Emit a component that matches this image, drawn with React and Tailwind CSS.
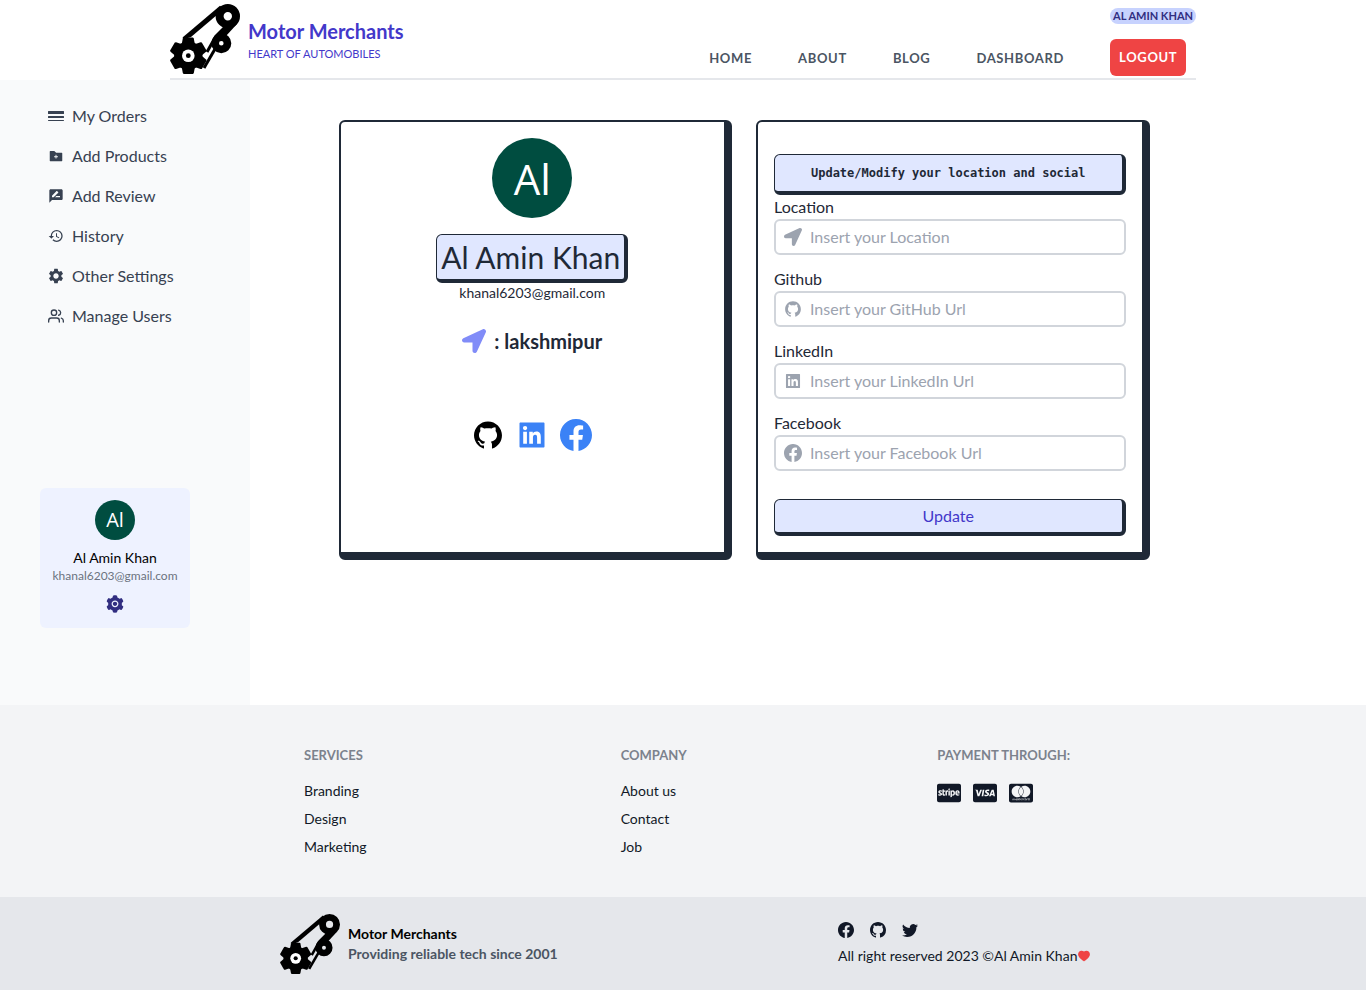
import React from "react";
import { BsBorderWidth, BsFacebook, BsGithub, BsTwitter } from "react-icons/bs";
import { AiFillFolderAdd, AiFillSetting, AiFillGithub, AiFillLinkedin, AiFillHeart } from "react-icons/ai";
import { MdRateReview, MdHistory, MdSettings } from "react-icons/md";
import { FiUsers } from "react-icons/fi";
import { FaLocationArrow, FaCcStripe, FaCcVisa, FaCcMastercard } from "react-icons/fa";

function Logo({ className }) {
  const teeth = [0, 60, 120, 180, 240, 300];
  return (
    <svg viewBox="0 0 70 70" className={className} role="img" aria-label="Motor Merchants logo">
      <path d="M14.5 35 L12.5 33.5 L50 1.8 L54 5 L21 33 Z" />
      <path d="M67 20 L56 32 L44 36 L45 31 L54 22 Z" />
      <g fill="none" stroke="#000" strokeWidth="3">
        <path d="M46 32 L37 48" />
        <path d="M45 45 L34 64" />
      </g>
      <path fillRule="evenodd" d="M57.8 0a12.2 12.2 0 1 1 0 24.4a12.2 12.2 0 1 1 0-24.4zM57.8 8a4.2 4.2 0 1 0 0 8.4a4.2 4.2 0 1 0 0-8.4z" />
      <path fillRule="evenodd" d="M51.3 29.3a10 10 0 1 1 0 20a10 10 0 1 1 0-20zM51.3 37a2.3 2.3 0 1 0 0 4.6a2.3 2.3 0 1 0 0-4.6z" />
      <g transform="translate(18.3 51.7)">
        <circle r="14.2" />
        {teeth.map((a) => (
          <path key={a} d="M-6.5 -12 L-5.5 -17.3 L-4.7 -18.3 H4.7 L5.5 -17.3 L6.5 -12 Z" transform={`rotate(${a})`} />
        ))}
        <circle r="6.3" fill="#fff" />
        <circle r="2.4" />
      </g>
    </svg>
  );
}

const nav = ["Home", "About", "Blog", "Dashboard"];
const side = [
  [BsBorderWidth, "My Orders", "size-4"],
  [AiFillFolderAdd, "Add Products", "size-4"],
  [MdRateReview, "Add Review", "size-4"],
  [MdHistory, "History", "size-4"],
  [MdSettings, "Other Settings", "size-[18px]"],
  [FiUsers, "Manage Users", "size-4"],
];
const fields = [
  [FaLocationArrow, "Location", "Insert your Location"],
  [AiFillGithub, "Github", "Insert your GitHub Url"],
  [AiFillLinkedin, "LinkedIn", "Insert your LinkedIn Url"],
  [BsFacebook, "Facebook", "Insert your Facebook Url"],
];
const columns = [
  ["Services", ["Branding", "Design", "Marketing"]],
  ["Company", ["About us", "Contact", "Job"]],
];

function Header() {
  return (
    <header className="mx-auto flex h-20 max-w-[1026px] justify-between border-b-2 border-[#e5e7eb]">
      <a href="#home" className="flex items-start gap-2 pt-1">
        <Logo className="size-[70px]" />
        <span className="flex flex-col gap-px pt-[13px] text-[#4338ca]">
          <span className="text-xl leading-7 font-bold">Motor Merchants</span>
          <span className="text-[11px] leading-4">HEART OF AUTOMOBILES</span>
        </span>
      </a>
      <nav className="flex items-end gap-[46px] text-[13px] font-bold tracking-wider text-[#4b5563] uppercase">
        {nav.map((n) => (
          <a key={n} href={`#${n.toLowerCase()}`} className="pb-2.5">{n}</a>
        ))}
        <div className="flex h-full flex-col items-start justify-between pt-2 pb-0.5">
          <span className="rounded-full bg-[#c7d2fe] px-[3px] text-[11px] leading-4 font-bold tracking-normal text-[#312e81]">Al Amin Khan</span>
          <button type="button" className="h-[37px] rounded-md bg-[#ef4444] px-[9px] font-bold tracking-wider text-white uppercase">Logout</button>
        </div>
      </nav>
    </header>
  );
}

function Sidebar() {
  return (
    <aside className="flex w-[250px] shrink-0 flex-col justify-between bg-[#f9fafb] px-10 pt-4 pb-[77px]">
      <nav className="flex flex-col">
        {side.map(([Icon, label, size]) => (
          <a key={label} href="#menu" className="flex h-10 items-center gap-2 px-2 text-[#374151]">
            <span className="flex size-4 shrink-0 items-center justify-center">
              <Icon className={`${size} shrink-0`} />
            </span>
            {label}
          </a>
        ))}
      </nav>
      <div className="flex h-[140px] w-[150px] flex-col items-center rounded-md bg-[#eef2ff] pt-3">
        <span className="flex size-10 items-center justify-center rounded-full bg-[#004d40] font-['Open_Sans',sans-serif] text-xl font-medium text-white">Al</span>
        <span className="mt-2 text-sm leading-5 text-black">Al Amin Khan</span>
        <span className="text-xs leading-4 text-[#6b7280]">khanal6203@gmail.com</span>
        <button type="button" aria-label="Settings" className="mt-2.5 text-[#312e81]"><AiFillSetting className="size-5" /></button>
      </div>
    </aside>
  );
}

function Profile() {
  return (
    <section className="flex flex-col items-center rounded-md border-2 border-r-8 border-b-8 border-[#1f2937] pt-4">
      <span className="flex size-20 items-center justify-center rounded-full bg-[#004d40] font-['Open_Sans',sans-serif] text-[42px] font-medium text-white">Al</span>
      <h1 className="mt-4 rounded-md border border-r-4 border-b-4 border-[#1f2937] bg-[#e0e7ff] px-1 pt-1 pb-1 text-3xl leading-9">Al Amin Khan</h1>
      <p className="text-sm leading-5">khanal6203@gmail.com</p>
      <p className="mt-6 flex items-center gap-2 text-xl leading-7 font-bold">
        <FaLocationArrow className="size-6 text-[#818cf8]" />: lakshmipur
      </p>
      <div className="mt-16 flex gap-3">
        <a href="#github" aria-label="Github" className="text-black"><AiFillGithub className="size-8" /></a>
        <a href="#linkedin" aria-label="LinkedIn" className="text-[#3b82f6]"><AiFillLinkedin className="size-8" /></a>
        <a href="#facebook" aria-label="Facebook" className="text-[#3b82f6]"><BsFacebook className="size-8" /></a>
      </div>
    </section>
  );
}

function UpdateForm() {
  return (
    <form className="flex flex-col rounded-md border-2 border-r-8 border-b-8 border-[#1f2937] px-4 pt-8 pb-4">
      <h2 className="flex h-[41px] items-center justify-center rounded-md border border-r-4 border-b-4 border-[#1f2937] bg-[#e0e7ff] font-['DejaVu_Sans_Mono',monospace] text-xs font-bold">
        Update/Modify your location and social
      </h2>
      <div className="flex flex-col gap-3">
        {fields.map(([Icon, label, hint]) => (
          <div key={label}>
            <label htmlFor={label} className="block leading-6">{label}</label>
            <div className="flex h-9 items-center gap-2 rounded-md border-2 border-[#d1d5db] px-2">
              <Icon className="size-[18px] shrink-0 text-[#9ca3af]" />
              <input id={label} type="text" placeholder={hint} className="w-full min-w-0 outline-none placeholder:text-[#9ca3af]" />
            </div>
          </div>
        ))}
      </div>
      <button type="submit" className="mt-7 h-[37px] rounded-md border border-r-4 border-b-4 border-[#1f2937] bg-[#e0e7ff] text-[#4338ca]">Update</button>
    </form>
  );
}

function Footer() {
  return (
    <footer className="text-sm text-[#111827]">
      <div className="bg-[#f3f4f6] pl-48">
        <div className="mx-auto grid h-48 max-w-[950px] grid-cols-3 pt-10">
          {columns.map(([title, links]) => (
            <div key={title} className="flex flex-col gap-2">
              <h3 className="mb-2 text-[13px] leading-5 font-bold text-[#7c828d] uppercase">{title}</h3>
              {links.map((l) => (
                <a key={l} href="#footer" className="leading-5">{l}</a>
              ))}
            </div>
          ))}
          <div>
            <h3 className="mb-4 text-[13px] leading-5 font-bold text-[#7c828d] uppercase">Payment through:</h3>
            <div className="flex gap-3">
              <FaCcStripe className="size-6" />
              <FaCcVisa className="size-6" />
              <FaCcMastercard className="size-6" />
            </div>
          </div>
        </div>
      </div>
      <div className="bg-[#e5e7eb]">
        <div className="mx-auto flex h-[93px] max-w-[806px] items-start justify-between pt-[17px]">
          <div className="flex gap-2">
            <Logo className="size-[60px]" />
            <p className="flex flex-col pt-2.5 leading-5 font-bold text-[#4b5563]">
              <span className="text-black">Motor Merchants</span>
              Providing reliable tech since 2001
            </p>
          </div>
          <div className="flex w-[248px] flex-col gap-2 pt-2">
            <div className="flex gap-4">
              <a href="#facebook" aria-label="Facebook"><BsFacebook className="size-4" /></a>
              <a href="#github" aria-label="Github"><BsGithub className="size-4" /></a>
              <a href="#twitter" aria-label="Twitter"><BsTwitter className="size-4" /></a>
            </div>
            <p className="flex items-center leading-5 whitespace-nowrap">All right reserved 2023 ©Al Amin Khan<AiFillHeart className="size-3.5 shrink-0 text-[#ef4444]" /></p>
          </div>
        </div>
      </div>
    </footer>
  );
}

export default function App() {
  return (
    <div className="min-h-screen bg-white font-['Lato',sans-serif] text-base text-[#1f2937]">
      <Header />
      <div className="flex min-h-[625px]">
        <Sidebar />
        <main className="flex-1 pr-32">
          <div className="mx-auto grid max-w-[811px] grid-cols-2 gap-6 pt-10">
            <Profile />
            <UpdateForm />
          </div>
        </main>
      </div>
      <Footer />
    </div>
  );
}
